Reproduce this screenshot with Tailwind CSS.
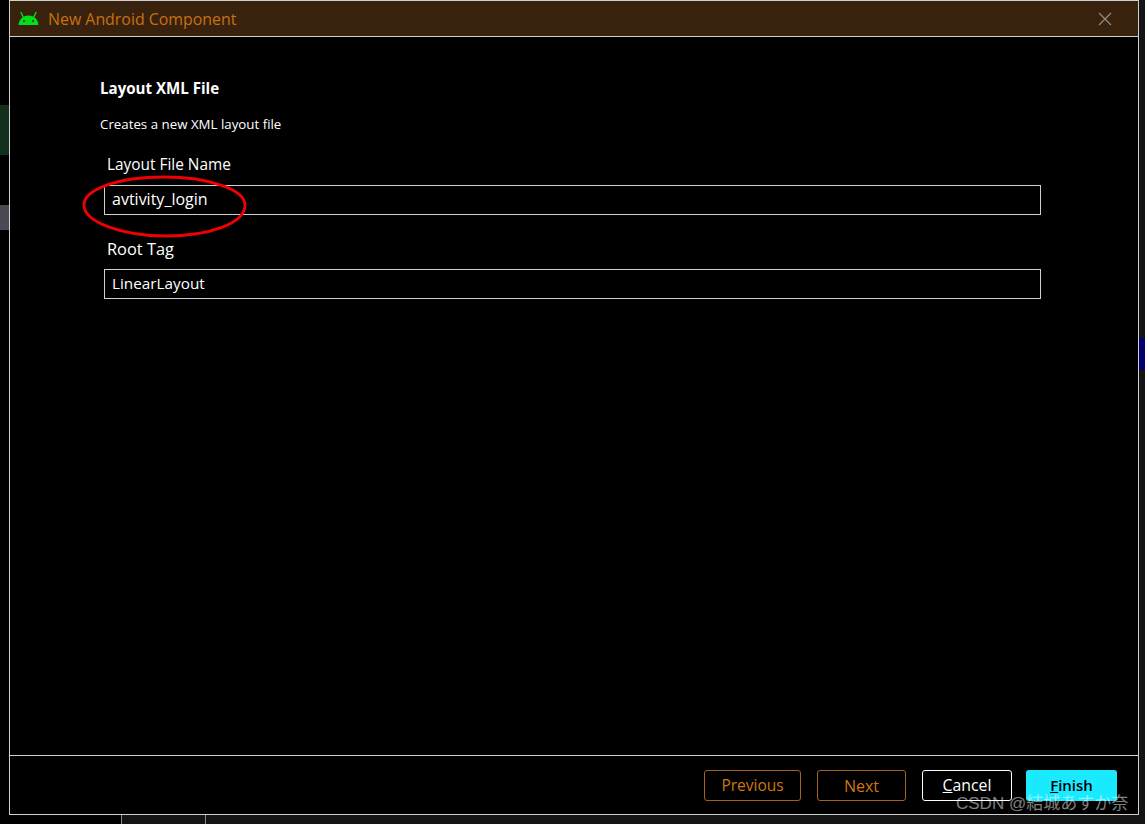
<!DOCTYPE html>
<html lang="en">
<head>
  <meta charset="UTF-8" />
  <title>New Android Component</title>
  <script src="https://cdn.jsdelivr.net/npm/@tailwindcss/browser@4"></script>
</head>
<body class="bg-[#141414] w-[1145px] h-[824px] overflow-hidden relative font-['Open_Sans',sans-serif]">

  <div class="flex h-[815px]">
    <!-- sliver of the window behind, left -->
    <div class="w-[9px] h-full bg-black flex flex-col shrink-0">
      <div class="h-[105px]"></div>
      <div class="h-[50px] bg-[#12301c]"></div>
      <div class="h-[50px]"></div>
      <div class="h-[25px] bg-[#4a4a55]"></div>
    </div>

    <!-- dialog -->
    <div class="w-[1130px] h-full bg-black border border-[#d0d0d0] flex flex-col shrink-0">
      <div class="h-[36px] bg-[#38220e] border-b border-[#d0d0d0] flex items-center pl-[8px] pr-[26px] shrink-0">
        <svg width="21" height="15" viewBox="0 0 21 15" class="mr-[9px]">
          <path d="M0.5 14 C0.8 8.5 5 4.5 10.5 4.5 C16 4.5 20.2 8.5 20.5 14 Z" fill="#00e01a"/>
          <path d="M5.5 6.5 L3 1.5 M15.5 6.5 L18 1.5" stroke="#00e01a" stroke-width="1.4" stroke-linecap="round"/>
          <circle cx="6" cy="10" r="1" fill="#38220e"/>
          <circle cx="15" cy="10" r="1" fill="#38220e"/>
        </svg>
        <span class="text-[#c8700f] text-[15.9px] relative top-[1px]">New Android Component</span>
        <svg width="14" height="14" viewBox="0 0 14 14" class="ml-auto">
          <path d="M1 1 L13 13 M13 1 L1 13" stroke="#8f8a84" stroke-width="1.3"/>
        </svg>
      </div>

      <div class="flex-1 pl-[90px] pr-[97px] pt-[41px]">
        <h2 class="text-white text-[15.1px] font-bold leading-[20px]">Layout XML File</h2>
        <p class="text-white text-[13.3px] leading-[16px] mt-[18px]">Creates a new XML layout file</p>

        <div class="pl-[4px]">
          <label class="block text-white text-[15.4px] leading-[20px] pl-[3px] mt-[23px]">Layout File Name</label>
          <div class="h-[30px] border border-[#d0d0d0] text-white text-[16px] flex items-center pl-[7px] pb-[2px] mt-[10px]">avtivity_login</div>
          <label class="block text-white text-[16.4px] leading-[20px] pl-[3px] mt-[24px]">Root Tag</label>
          <div class="h-[30px] border border-[#d0d0d0] text-white text-[15.3px] flex items-center pl-[7px] pb-[2px] mt-[10px]">LinearLayout</div>
        </div>
      </div>

      <div class="h-[59px] border-t border-[#d0d0d0] flex items-start justify-end pt-[14px] pr-[21px] shrink-0">
        <button type="button" class="w-[97px] h-[31px] border border-[#a4621c] rounded-[3px] text-[#d0760f] text-[15.5px] mr-[16px]">Previous</button>
        <button type="button" class="w-[89px] h-[31px] border border-[#a4621c] rounded-[3px] text-[#d0760f] text-[16px] mr-[16px]">Next</button>
        <button type="button" class="w-[90px] h-[31px] border border-white rounded-[3px] text-white text-[15.8px] mr-[14px]"><span class="underline">C</span>ancel</button>
        <button type="button" class="w-[91px] h-[31px] bg-[#1aeaff] rounded-[3px] text-black text-[15px] font-semibold"><span class="underline">F</span>inish</button>
      </div>
    </div>

    <!-- sliver of the window behind, right -->
    <div class="flex-1 flex flex-col">
      <div class="h-[338px]"></div>
      <div class="h-[32px] bg-[#000070]"></div>
    </div>
  </div>

  <!-- sliver of the window behind, bottom -->
  <div class="h-[9px] flex">
    <div class="w-[121px] bg-black"></div>
    <div class="w-[85px] border-x border-[#8a8a8a]"></div>
  </div>

  <!-- hand drawn mark over the first field -->
  <svg class="absolute left-[80px] top-[172px]" width="170" height="70" viewBox="0 0 170 70" fill="none">
    <path d="M4 33 C4 18 36 5 84 5 C130 5 165 18 165 33 C165 52 128 64 86 64 C42 64 4 50 4 33 Z" stroke="#f00000" stroke-width="2.8"/>
  </svg>

  <!-- watermark -->
  <div class="absolute left-[956px] top-[793px] text-[17px] leading-[22px] text-white/50 whitespace-nowrap font-['Liberation_Sans','Noto_Sans_CJK_JP',sans-serif]">CSDN @結城あすか奈</div>

</body>
</html>
